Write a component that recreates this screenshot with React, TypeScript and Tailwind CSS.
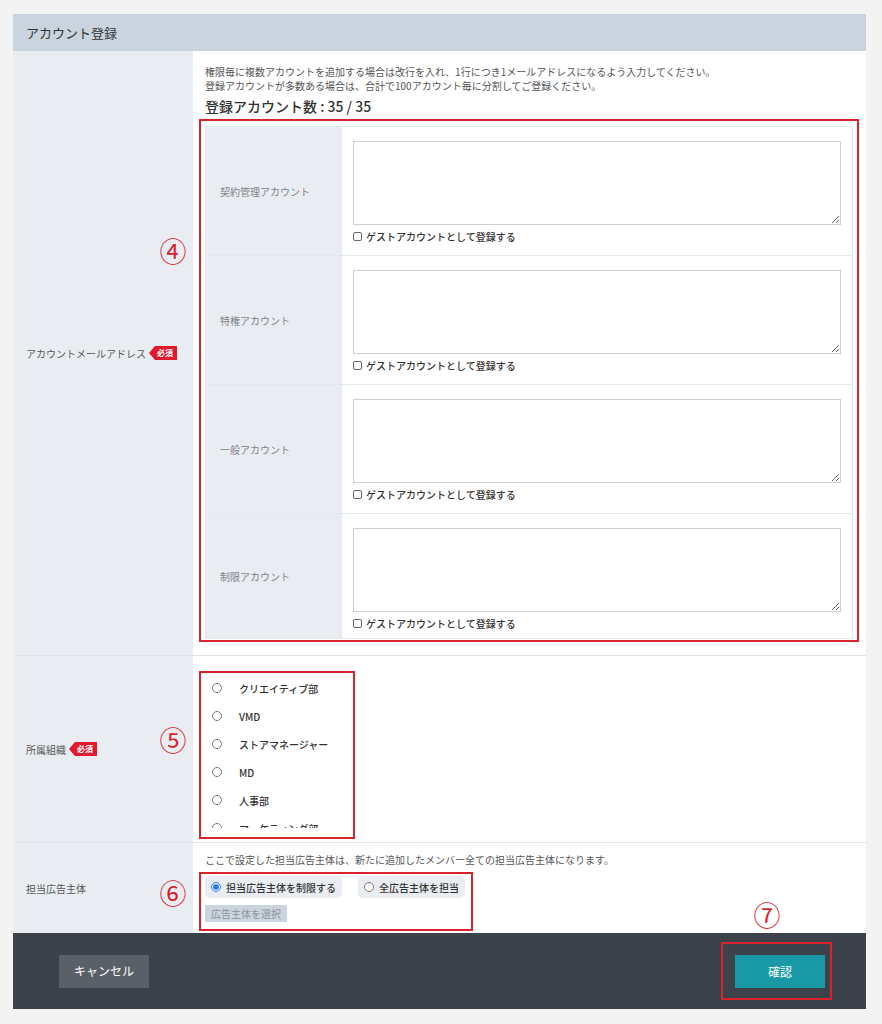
const font = { fontFamily: '"Noto Sans CJK JP", "Noto Sans", sans-serif' };

const Required = () => (
  <span className="ml-[3px] inline-flex h-[14px] items-center bg-[#e1192f] pl-[8px] pr-[4px] text-[8px] font-bold leading-none text-white [clip-path:polygon(6px_0,100%_0,100%_100%,6px_100%,0_50%)]">
    必須
  </span>
);

const accountTypes = ["契約管理アカウント", "特権アカウント", "一般アカウント", "制限アカウント"];
const orgs = ["クリエイティブ部", "VMD", "ストアマネージャー", "MD", "人事部", "マーケティング部"];

// red annotation numbers drawn over the form
const Circled = ({ n, className }: { n: string; className: string }) => (
  <span
    className={`absolute flex h-[24px] w-[24px] items-center justify-center text-[27px] leading-none text-[#d8222c] ${className}`}
  >
    {n}
  </span>
);

const AccountRow = ({ label }: { label: string }) => (
  <div className="flex h-[129px] border-b border-[#e3e8ee] last:h-[124px] last:border-b-0">
    <div className="flex w-[136px] shrink-0 items-center bg-[#e9edf2] pl-[14px] text-[10px] text-[#7c838b]">
      {label}
    </div>
    <div className="flex-1 bg-white pl-[11px] pr-[11px] pt-[14px]">
      <textarea className="block h-[84px] w-full resize-y border border-[#c9d0d8] bg-white" />
      <label className="mt-[4px] flex items-center gap-[4px] text-[10px] font-medium text-[#333]">
        <span className="inline-block h-[9px] w-[9px] rounded-[2px] border border-[#666] bg-white" />
        ゲストアカウントとして登録する
      </label>
    </div>
  </div>
);

export default function App() {
  return (
    <div className="min-h-[1024px] bg-[#f3f3f3] pl-[13px] pr-[16px] pt-[14px]" style={font}>
      <div className="relative w-[853px] bg-white">
        <div className="flex h-[37px] items-center bg-[#c9d4df] pl-[13px] text-[13px] text-[#333]">
          アカウント登録
        </div>

        {/* account email */}
        <div className="flex border-b border-[#dfe4ea]">
          <div className="flex w-[180px] shrink-0 items-center bg-[#e9edf2] pl-[13px] text-[10px] text-[#555]">
            アカウントメールアドレス
            <Required />
          </div>
          <div className="flex-1 pb-[13px] pl-[6px] pr-[7px] pt-[14px]">
            <p className="pl-[6px] text-[10px] leading-[14px] text-[#555]">
              権限毎に複数アカウントを追加する場合は改行を入れ、1行につき1メールアドレスになるよう入力してください。
              <br />
              登録アカウントが多数ある場合は、合計で100アカウント毎に分割してご登録ください。
            </p>
            <p className="mt-[4px] pl-[6px] text-[14px] font-medium leading-[19px] text-[#333]">
              登録アカウント数 : 35 / 35
            </p>
            <div className="mt-[3px] border-2 border-[#d8222c] px-[4px] pb-[1px] pt-[5px]">
              <div className="border border-[#e3e8ee]">
                {accountTypes.map((t) => (
                  <AccountRow key={t} label={t} />
                ))}
              </div>
            </div>
          </div>
        </div>

        {/* organization */}
        <div className="flex border-b border-[#dfe4ea]">
          <div className="flex w-[180px] shrink-0 items-center bg-[#e9edf2] pl-[13px] text-[10px] text-[#555]">
            所属組織
            <Required />
          </div>
          <div className="flex-1 pb-[3px] pl-[6px] pt-[15px]">
            <div className="h-[168px] w-[156px] border-2 border-[#d8222c] pt-[1px]">
              <div className="h-[154px] overflow-hidden">
                {orgs.map((o) => (
                  <div key={o} className="flex h-[28px] items-center pl-[11px] text-[10px] font-medium text-[#333]">
                    <span className="mr-[17px] inline-block h-[10px] w-[10px] rounded-full border border-[#777] bg-white" />
                    {o}
                  </div>
                ))}
              </div>
            </div>
          </div>
        </div>

        {/* advertiser */}
        <div className="flex">
          <div className="flex w-[180px] shrink-0 items-center bg-[#e9edf2] pl-[13px] text-[10px] text-[#555]">
            担当広告主体
          </div>
          <div className="flex-1 pb-[2px] pl-[6px] pt-[10px]">
            <p className="pl-[6px] text-[10px] leading-[14px] text-[#555]">
              ここで設定した担当広告主体は、新たに追加したメンバー全ての担当広告主体になります。
            </p>
            <div className="mt-[5px] w-[274px] border-2 border-[#d8222c] pb-[6px] pl-[4px] pt-[2px]">
              <div className="flex gap-[16px]">
                <div className="flex h-[22px] items-center gap-[5px] rounded-[5px] bg-[#e9edf2] px-[6px] text-[10px] font-medium text-[#333]">
                  <span className="flex h-[10px] w-[10px] items-center justify-center rounded-full border border-[#2f7de1] bg-white">
                    <span className="h-[6px] w-[6px] rounded-full bg-[#2f7de1]" />
                  </span>
                  担当広告主体を制限する
                </div>
                <div className="flex h-[22px] items-center gap-[5px] rounded-[5px] bg-[#e9edf2] px-[6px] text-[10px] font-medium text-[#333]">
                  <span className="h-[10px] w-[10px] rounded-full border border-[#777] bg-white" />
                  全広告主体を担当
                </div>
              </div>
              <div className="mt-[7px] inline-flex h-[17px] items-center bg-[#cbd5df] px-[6px] text-[10px] text-[#8b939b]">
                広告主体を選択
              </div>
            </div>
          </div>
        </div>

        {/* footer */}
        <div className="flex h-[76px] items-center justify-between bg-[#3c4249] pl-[46px] pr-[34px]">
          <button className="h-[33px] w-[90px] bg-[#5a6068] text-[12px] text-white">キャンセル</button>
          <div className="border-2 border-[#d8222c] pb-[10px] pl-[12px] pr-[5px] pt-[11px]">
            <button className="block h-[33px] w-[90px] bg-[#1899a5] text-[12px] text-white">確認</button>
          </div>
        </div>

        <Circled n="④" className="left-[148px] top-[224px]" />
        <Circled n="⑤" className="left-[148px] top-[713px]" />
        <Circled n="⑥" className="left-[148px] top-[866px]" />
        <Circled n="⑦" className="left-[742px] top-[888px]" />
      </div>
    </div>
  );
}
